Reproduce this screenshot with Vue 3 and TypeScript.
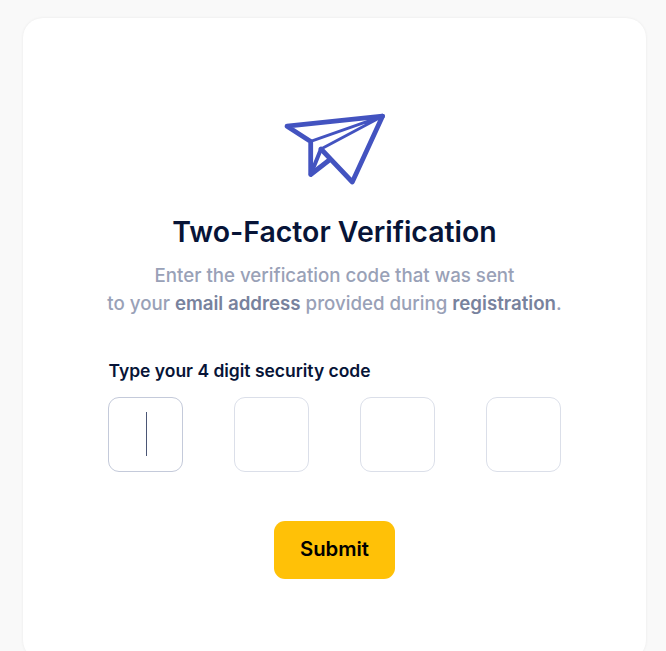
<script setup lang="ts">
import { onMounted, ref } from 'vue'

const digits = ref<string[]>(['', '', '', ''])
const active = ref(0)
const inputs = ref<HTMLInputElement[]>([])

function onInput(index: number) {
  digits.value[index] = digits.value[index].replace(/\D/g, '').slice(-1)
  if (digits.value[index] && index < digits.value.length - 1) {
    inputs.value[index + 1].focus()
  }
}

onMounted(() => inputs.value[0]?.focus())
</script>

<template>
  <main class="page">
    <form class="card" @submit.prevent>
      <svg class="plane" viewBox="0 0 104 76" fill="none" stroke="#4353c0" stroke-linejoin="round" stroke-linecap="round">
        <g stroke-width="4.8">
          <path d="M99.5 7.2 4 17.2 27.7 32.4V65.5L47 50.5" />
          <path d="M99.5 7.2 69.3 73 38 40" />
        </g>
        <path stroke-width="4" d="M38 40 27.7 65.5" />
        <path stroke-width="3" d="M27.7 32.4 99.5 7.2 38 40" />
      </svg>
      <h1 class="title">Two-Factor Verification</h1>
      <p class="lead">
        Enter the verification code that was sent<br />
        to your <strong>email address</strong> provided during <strong>registration</strong>.
      </p>
      <div class="code">
        <label class="label">Type your 4 digit security code</label>
        <div class="boxes">
          <div v-for="(_, i) in digits" :key="i" class="box" :class="{ active: active === i }">
            <input
              ref="inputs"
              v-model="digits[i]"
              class="digit"
              inputmode="numeric"
              @input="onInput(i)"
              @focus="active = i"
            />
            <span v-if="active === i && !digits[i]" class="caret"></span>
          </div>
        </div>
      </div>
      <button class="submit" type="submit">Submit</button>
    </form>
  </main>
</template>

<style>
body {
  background: #f9f9f9;
  overflow: hidden;
}
</style>

<style scoped>
.page {
  box-sizing: border-box;
  height: 651px;
  padding: 18px 20px 0 23px;
  overflow: hidden;
  font-family: Inter, sans-serif;
}
.card {
  box-sizing: border-box;
  height: 642px;
  padding: 91px 85px 0;
  display: flex;
  flex-direction: column;
  align-items: center;
  background: #fff;
  border-radius: 20px;
  box-shadow: 0 0 3px rgba(0, 0, 0, 0.07);
}
.plane {
  display: block;
  width: 104px;
  height: 76px;
  flex: none;
}
.title {
  margin: 29px 0 0;
  font-size: 28.44px;
  line-height: 36px;
  font-weight: 600;
  color: #071437;
  white-space: nowrap;
}
.lead {
  margin: 12px 0 0;
  font-size: 18.69px;
  line-height: 28px;
  font-weight: 500;
  color: #99a1b7;
  text-align: center;
  white-space: nowrap;
}
.lead strong {
  font-weight: 600;
  color: #78829d;
}
.code {
  width: 453px;
  margin-top: 40px;
}
.label {
  display: block;
  margin-left: 0.5px;
  font-size: 17.47px;
  line-height: 26px;
  font-weight: 600;
  color: #071437;
}
.boxes {
  display: flex;
  justify-content: space-between;
  margin-top: 13px;
}
.box {
  box-sizing: border-box;
  width: 75px;
  height: 75px;
  display: flex;
  position: relative;
  border: 1px solid #dbdfe9;
  border-radius: 11px;
}
.box.active {
  border-color: #c4cada;
}
.digit {
  width: 100%;
  padding: 0;
  border: 0;
  outline: 0;
  background: transparent;
  text-align: center;
  font: 500 36px Inter, sans-serif;
  color: #4b5675;
  caret-color: transparent;
}
.caret {
  position: absolute;
  left: 37px;
  top: 14px;
  width: 1px;
  height: 44px;
  background: #4b5675;
}
.submit {
  width: 121px;
  height: 58px;
  margin-top: 49px;
  padding: 0 0 3px;
  border: 0;
  border-radius: 11px;
  background: #ffc107;
  color: #000;
  font: 600 20.31px Inter, sans-serif;
}
</style>
